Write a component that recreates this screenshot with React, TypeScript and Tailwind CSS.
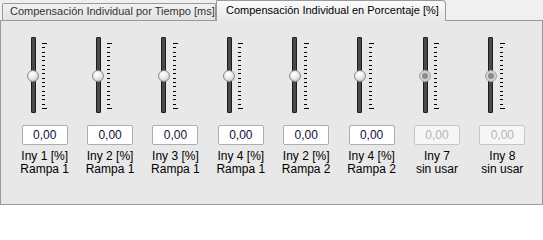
const channels = [
  { name: 'Iny 1 [%]', sub: 'Rampa 1', enabled: true },
  { name: 'Iny 2 [%]', sub: 'Rampa 1', enabled: true },
  { name: 'Iny 3 [%]', sub: 'Rampa 1', enabled: true },
  { name: 'Iny 4 [%]', sub: 'Rampa 1', enabled: true },
  { name: 'Iny 2 [%]', sub: 'Rampa 2', enabled: true },
  { name: 'Iny 4 [%]', sub: 'Rampa 2', enabled: true },
  { name: 'Iny 7', sub: 'sin usar', enabled: false },
  { name: 'Iny 8', sub: 'sin usar', enabled: false },
];

const ticks = Array.from({ length: 16 }, (_, i) => i);

function VerticalSlider({ enabled }: { enabled: boolean }) {
  return (
    <div className="flex h-[76px] pl-[15px]">
      <div className="relative w-[12px] h-full">
        <div className="mx-auto w-[5px] h-full rounded-[1px] bg-[#4a4a4a] border border-[#1e1e1e]" />
        {enabled ? (
          <div className="absolute left-0 top-[33px] w-[12px] h-[12px] rounded-full border border-[#8a8a8a] bg-[radial-gradient(circle_at_40%_30%,#ffffff_0%,#ececec_45%,#b4b4b4_100%)]" />
        ) : (
          <div className="absolute left-0 top-[33px] w-[12px] h-[12px] rounded-full border border-[#a6a6a6] bg-[#d2d2d2] flex items-center justify-center">
            <div className="w-[6px] h-[6px] rounded-full bg-[#8c8c8c]" />
          </div>
        )}
      </div>
      <div className="ml-[3px] mt-[6px] h-[66px] w-[5px] flex flex-col justify-between">
        {ticks.map((t) => (
          <div
            key={t}
            className={
              t === 0 || t === ticks.length - 1
                ? 'h-px w-[5px] bg-black'
                : 'h-px w-[3px] bg-black'
            }
          />
        ))}
      </div>
    </div>
  );
}

export default function App() {
  return (
    <div className="w-[543px] h-[205px] bg-[#f0f0f0] font-['Liberation_Sans',Arial,sans-serif] text-[12px] text-black overflow-hidden">
      {/* pestañas */}
      <div className="flex items-end h-[20px] pl-[2px] text-[11px] whitespace-nowrap">
        <div className="h-[17px] w-[214px] border border-b-0 border-[#9a9a9a] rounded-t-[2px] bg-[linear-gradient(#f2f2f2,#e3e3e3)] pl-[7px] leading-[15px] text-[#333]">
          Compensación Individual por Tiempo [ms]
        </div>
        <div className="relative z-10 -mb-px h-[21px] w-[230px] border border-b-0 border-[#9a9a9a] rounded-tr-[4px] rounded-tl-[1px] bg-[linear-gradient(#fbfbfb,#e8e8e8)] pl-[9px] leading-[19px]">
          Compensación Individual en Porcentaje [%]
        </div>
      </div>

      {/* panel */}
      <div className="h-[185px] border border-[#9a9a9a] bg-[#e8e8e8] pt-[16px] pl-[11px]">
        <div className="grid grid-cols-8 w-[523px]">
          {channels.map((ch, i) => (
            <div key={i} className="flex flex-col">
              <VerticalSlider enabled={ch.enabled} />
              <div
                className={
                  ch.enabled
                    ? 'mt-[12px] mx-auto w-[46px] h-[20px] border border-[#abadb3] rounded-[2px] bg-white text-center leading-[18px] text-[#10103a]'
                    : 'mt-[12px] mx-auto w-[46px] h-[20px] border border-[#c6c6c6] rounded-[2px] bg-[#f6f6f6] text-center leading-[18px] text-[#b4b4b4]'
                }
              >
                0,00
              </div>
              <div className="mt-[5px] text-center leading-[13px]">
                <div>{ch.name}</div>
                <div>{ch.sub}</div>
              </div>
            </div>
          ))}
        </div>
      </div>
    </div>
  );
}
